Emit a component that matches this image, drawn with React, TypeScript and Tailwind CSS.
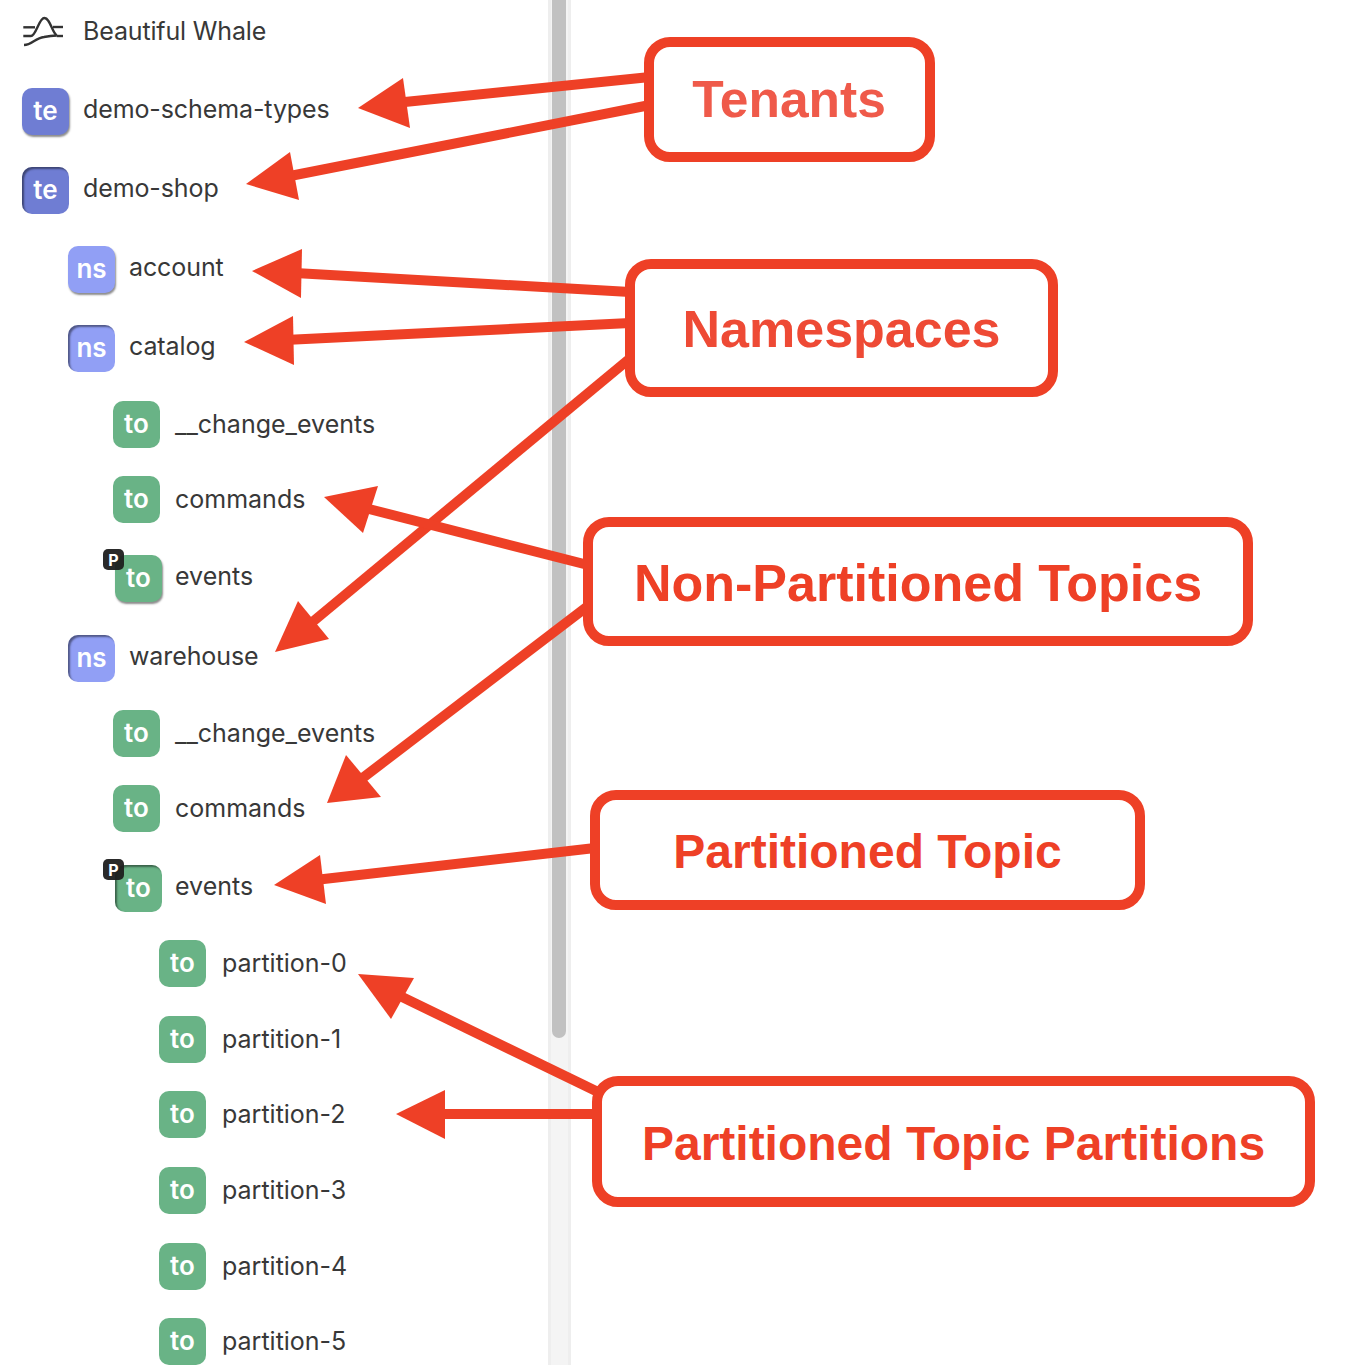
import React from 'react';

type Row = { kind: 'te' | 'ns' | 'to'; label: string; indent: string; top: string; raised?: boolean; pressed?: boolean; partitioned?: boolean };

const ROWS: Row[] = [
  { kind: 'te', label: 'demo-schema-types', indent: 'pl-[22px]', top: 'mt-[26px]', raised: true },
  { kind: 'te', label: 'demo-shop', indent: 'pl-[22px]', top: 'mt-[32px]', pressed: true },
  { kind: 'ns', label: 'account', indent: 'pl-[68px]', top: 'mt-[32px]', raised: true },
  { kind: 'ns', label: 'catalog', indent: 'pl-[68px]', top: 'mt-[32px]', pressed: true },
  { kind: 'to', label: '__change_events', indent: 'pl-[113px]', top: 'mt-[29px]' },
  { kind: 'to', label: 'commands', indent: 'pl-[113px]', top: 'mt-[28px]' },
  { kind: 'to', label: 'events', indent: 'pl-[115px]', top: 'mt-[32px]', raised: true, partitioned: true },
  { kind: 'ns', label: 'warehouse', indent: 'pl-[68px]', top: 'mt-[33px]', pressed: true },
  { kind: 'to', label: '__change_events', indent: 'pl-[113px]', top: 'mt-[28px]' },
  { kind: 'to', label: 'commands', indent: 'pl-[113px]', top: 'mt-[28px]' },
  { kind: 'to', label: 'events', indent: 'pl-[115px]', top: 'mt-[33px]', pressed: true, partitioned: true },
  { kind: 'to', label: 'partition-0', indent: 'pl-[159px]', top: 'mt-[28px]' },
  { kind: 'to', label: 'partition-1', indent: 'pl-[159px]', top: 'mt-[29px]' },
  { kind: 'to', label: 'partition-2', indent: 'pl-[159px]', top: 'mt-[28px]' },
  { kind: 'to', label: 'partition-3', indent: 'pl-[159px]', top: 'mt-[29px]' },
  { kind: 'to', label: 'partition-4', indent: 'pl-[159px]', top: 'mt-[29px]' },
  { kind: 'to', label: 'partition-5', indent: 'pl-[159px]', top: 'mt-[28px]' },
];

const BADGE_BG = { te: 'bg-[#6f7dd3]', ns: 'bg-[#919ff5]', to: 'bg-[#69b386]' };

// line start, line end, then the three points of the head
const ARROWS: { line: number[]; head: string }[] = [
  { line: [650, 77, 395, 103], head: '358,108 403,78 410,128' },
  { line: [650, 105, 285, 177], head: '246,184 290,152 299,200' },
  { line: [630, 292, 295, 273], head: '252,271 302,249 301,298' },
  { line: [630, 323, 285, 340], head: '244,342 293,316 294,365' },
  { line: [628, 360, 310, 624], head: '275,652 298,601 329,639' },
  { line: [588, 565, 365, 508], head: '324,497 378,486 363,533' },
  { line: [588, 606, 360, 780], head: '327,803 346,755 381,797' },
  { line: [595, 848, 315, 880], head: '274,885 320,855 326,904' },
  { line: [598, 1092, 398, 995], head: '358,974 414,978 391,1019' },
  { line: [598, 1114, 435, 1114], head: '396,1114 445,1090 445,1139' },
];

const CALLOUTS = [
  { label: 'Tenants', box: 'left-[644px] top-[37px] w-[291px] h-[125px]', text: 'text-[51.5px] text-[#ef5a4a] pr-[1px]' },
  { label: 'Namespaces', box: 'left-[625px] top-[259px] w-[433px] h-[138px]', text: 'text-[52px] text-[#ee4a35] pt-[1px]' },
  { label: 'Non-Partitioned Topics', box: 'left-[583px] top-[517px] w-[670px] h-[129px]', text: 'text-[52px] text-[#ee4026] pt-[3px]' },
  { label: 'Partitioned Topic', box: 'left-[590px] top-[790px] w-[555px] h-[120px]', text: 'text-[48px] text-[#ee4026] pt-[3px]' },
  { label: 'Partitioned Topic Partitions', box: 'left-[592px] top-[1076px] w-[723px] h-[131px]', text: 'text-[48px] text-[#ee4026] pt-[5px]' },
];

const Badge = ({ row }: { row: Row }) => (
  <div
    className={`relative w-[47px] h-[47px] pb-[2px] rounded-[10px] shrink-0 flex items-center justify-center text-white text-[26px] font-semibold leading-none ${BADGE_BG[row.kind]} ${
      row.raised ? 'shadow-[1px_2px_2px_rgba(0,0,0,0.45)]' : ''
    } ${row.pressed ? 'shadow-[inset_2px_2px_2px_rgba(0,0,0,0.45)]' : ''}`}
  >
    {row.kind}
    {row.partitioned && (
      <span className="absolute left-[-12px] top-[-6px] w-[21px] h-[21px] rounded-[5px] bg-[#1f1f1f]/95 flex items-center justify-center text-[16px] font-bold leading-none">
        P
      </span>
    )}
  </div>
);

const TreeRow = ({ row }: { row: Row }) => {
  const plain = row.kind === 'to' && !row.partitioned;
  const leaf = row.label.startsWith('partition');
  return (
    <div className={`flex items-center h-[47px] ${row.top} ${row.indent}`}>
      <Badge row={row} />
      <span
        className={`${row.partitioned ? 'ml-[13px]' : leaf ? 'ml-[16px]' : plain ? 'ml-[15px]' : 'ml-[14px]'} ${
          plain ? 'pb-[1px]' : 'pb-[4px]'
        } ${row.kind === 'to' ? 'tracking-normal' : 'tracking-[-0.1px]'} text-[25px] leading-none text-[#383838]`}
      >
        {row.label}
      </span>
    </div>
  );
};

export default function App() {
  return (
    <div className="relative w-[1352px] h-[1365px] overflow-hidden bg-white font-['Inter',sans-serif]">
      <div className="flex h-full">
        {/* tree */}
        <div className="w-[548px] shrink-0 overflow-hidden">
          <div className="flex items-center h-[62px] pl-[22px]">
            <svg width="44" height="32" viewBox="0 0 44 32" fill="none" stroke="#333" strokeWidth="2.4" className="shrink-0">
              <path d="M1.3 12.3H13" />
              <path d="M31 12H41" />
              <path d="M1.3 21H9C14 21 17 3 22.3 3C28 3 30 17 34.7 20.5" />
              <path d="M34.7 21H41" />
              <path d="M2 30C10 30 13 23 22 22C28 21 30 20.8 34.7 20.5" />
            </svg>
            <span className="ml-[17px] text-[25px] leading-none text-[#383838] tracking-[-0.15px]">Beautiful Whale</span>
          </div>
          {ROWS.map((row, i) => (
            <TreeRow key={i} row={row} />
          ))}
        </div>

        {/* scrollbar */}
        <div className="relative w-[23px] shrink-0 h-full bg-[#f4f4f4] border-x-[3px] border-[#eeeeee]">
          <div className="w-[14px] ml-[1px] h-[1038px] rounded-b-[7px] bg-[#c1c1c1]" />
        </div>
      </div>

      {/* annotations on top of the screenshot */}
      <svg className="absolute inset-0 pointer-events-none" width="1352" height="1365" viewBox="0 0 1352 1365">
        {ARROWS.map((a, i) => (
          <g key={i} fill="#ee4026">
            <line x1={a.line[0]} y1={a.line[1]} x2={a.line[2]} y2={a.line[3]} stroke="#ee4026" strokeWidth="10" />
            <polygon points={a.head} />
          </g>
        ))}
      </svg>
      {CALLOUTS.map((c) => (
        <div key={c.label} className={`absolute ${c.box} bg-white border-[10px] border-[#ee4026] rounded-[26px] flex items-center justify-center`}>
          <span className={`${c.text} font-['Liberation_Sans',sans-serif] font-bold leading-none whitespace-nowrap`}>{c.label}</span>
        </div>
      ))}
    </div>
  );
}
